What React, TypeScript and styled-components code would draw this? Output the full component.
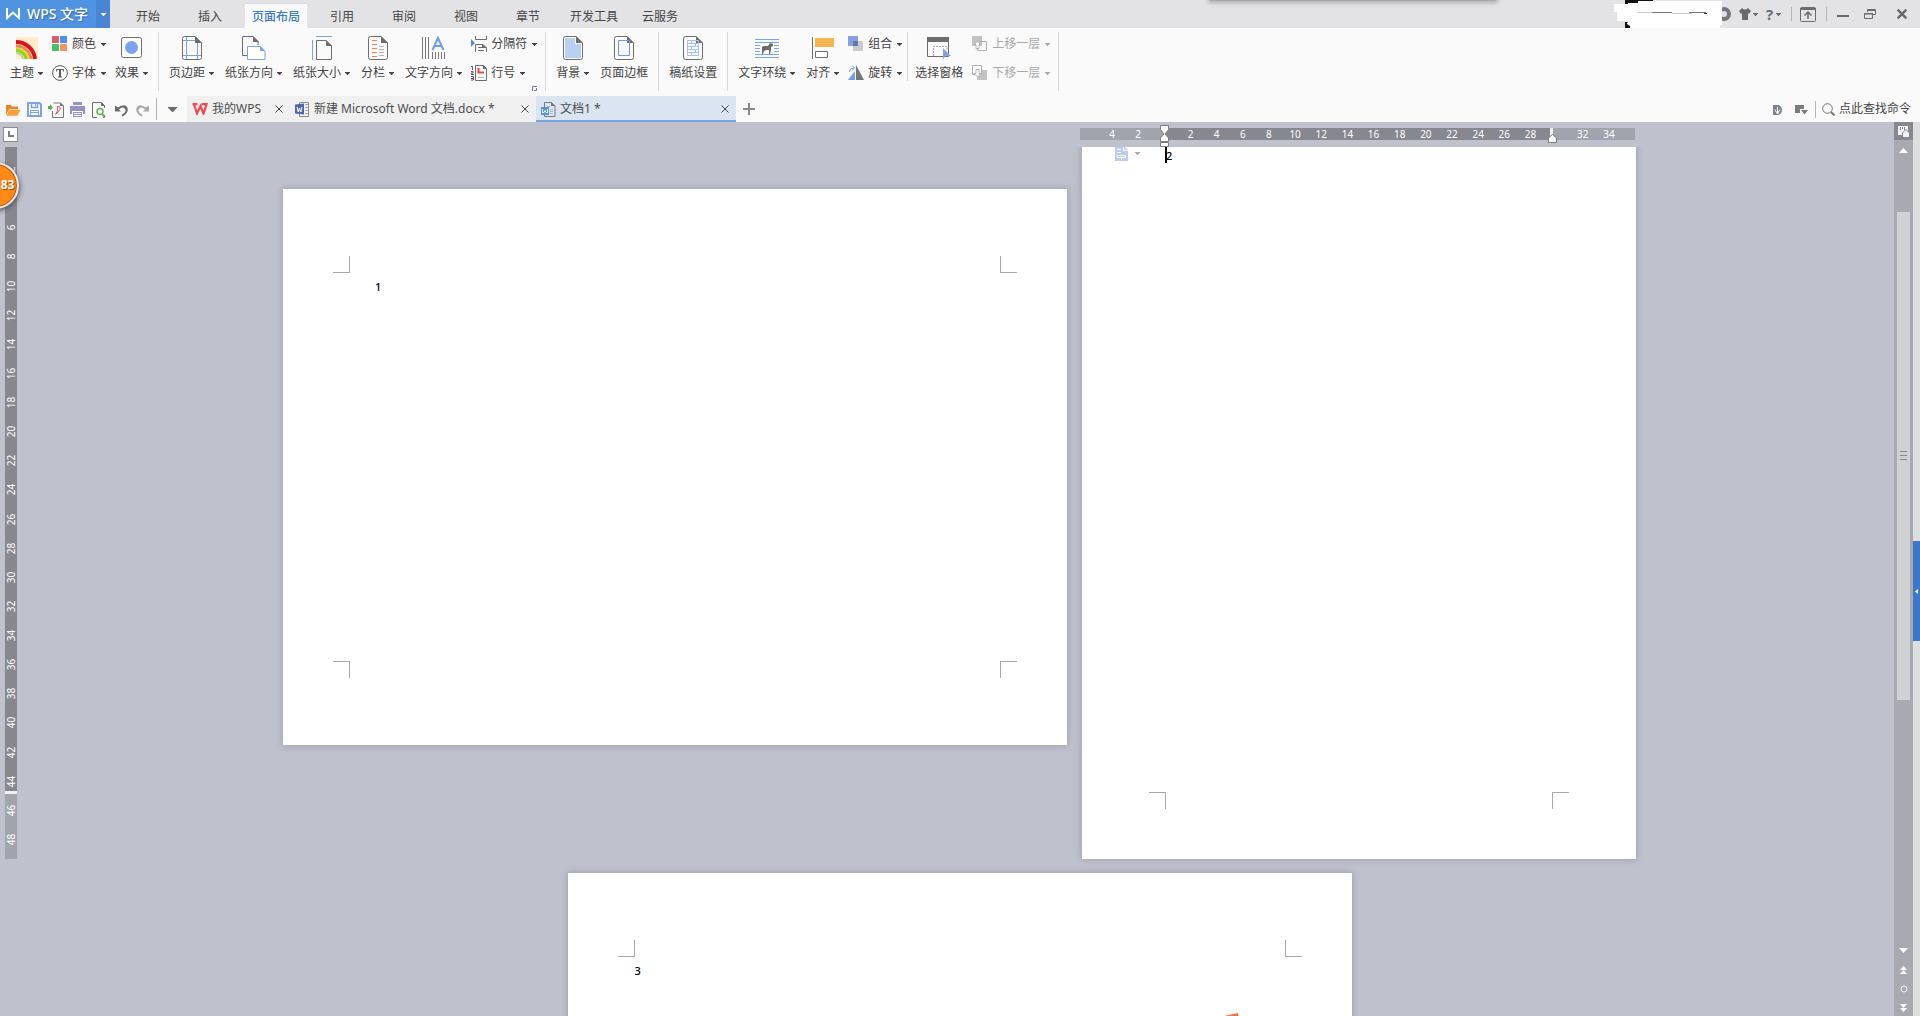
import React from "react";
import styled, { createGlobalStyle } from "styled-components";

const GlobalStyle = createGlobalStyle`
  * { box-sizing: border-box; }
  body {
    margin: 0;
    overflow: hidden;
    font-family: "Noto Sans", "Noto Sans CJK SC", sans-serif;
    font-size: 12px;
    line-height: 16px;
    color: #444;
    background: #bfc2cc;
  }
  button {
    margin: 0;
    padding: 0;
    border: 0;
    background: none;
    font: inherit;
    color: inherit;
    white-space: nowrap;
  }
  svg { display: block; flex: none; }
  p { margin: 0; }
`;

/* ---------- shell ---------- */

const Shell = styled.div`
  position: relative;
  display: flex;
  flex-direction: column;
  height: 100vh;
  overflow: hidden;
`;

const TitleBar = styled.header`
  display: flex;
  height: 28px;
  background: #e3e3e5;
`;

const Brand = styled.button`
  display: flex;
  align-items: center;
  gap: 7px;
  width: 96px;
  padding-left: 6px;
  background: #5093e3;
  color: #fff;
  font-size: 14px;
  font-weight: 500;
  text-shadow: 1px 1px 1px #3568a8;
`;

const BrandMenu = styled.button`
  display: grid;
  place-items: center;
  width: 14px;
  background: #4885d3;
  color: #fff;
`;

const MenuTabs = styled.nav`
  display: flex;
  align-items: flex-end;
  padding-left: 7px;
`;

const MenuTab = styled.button<{ $active?: boolean }>`
  min-width: 54px;
  height: 25px;
  margin: 0 4px;
  padding: 2px 7px 0;
  border: 0 solid #d6dae2;
  border-top-width: ${(p) => (p.$active ? 1 : 0)}px;
  background: ${(p) => (p.$active ? "#fafafa" : "transparent")};
  color: ${(p) => (p.$active ? "#3b78c6" : "#444")};
  font-weight: ${(p) => (p.$active ? 500 : 400)};
`;

const WindowTools = styled.div`
  display: flex;
  align-items: center;
  margin-left: auto;
  padding-right: 13px;
  color: #6a6a6e;
`;

const ToolButton = styled.button<{ $before?: number }>`
  display: flex;
  align-items: center;
  gap: 2px;
  margin-left: ${(p) => p.$before ?? 0}px;
`;

const HelpMark = styled.span`
  width: 9px;
  font-size: 15px;
  font-weight: 700;
`;

const ToolDivider = styled.span<{ $before: number; $height: number }>`
  width: 1px;
  height: ${(p) => p.$height}px;
  margin-left: ${(p) => p.$before}px;
  background: #b4b4b8;
`;

const PopupShade = styled.div`
  position: absolute;
  top: -4px;
  left: 1210px;
  width: 286px;
  height: 5px;
  background: #a9a9ab;
  box-shadow: 0 0 4px 2px #b0b0b3;
`;

/* ---------- ribbon ---------- */

const Ribbon = styled.section`
  display: flex;
  height: 68px;
  padding-top: 4px;
  background: #fafafa;
`;

const Group = styled.div`
  display: flex;
  gap: 1px;
  height: 59px;
  padding: 0 5px;
`;

const Divider = styled.span<{ $inner?: boolean }>`
  width: 1px;
  height: ${(p) => (p.$inner ? 49 : 59)}px;
  margin: 0 ${(p) => (p.$inner ? 1 : 0)}px;
  background: #d9d9dc;
`;

const BigButton = styled.button`
  display: flex;
  flex-direction: column;
  align-items: center;
  height: 52px;
  padding: 4px 5px 0;
`;

const BigIcon = styled.span`
  display: grid;
  place-items: center;
  height: 24px;
  margin-bottom: 4px;
`;

const Label = styled.span<{ $gap: number }>`
  display: flex;
  align-items: center;
  gap: ${(p) => p.$gap}px;
  line-height: 18px;
`;

const Stack = styled.div`
  display: flex;
  flex-direction: column;
  gap: 11px;
  padding: 3px 3px 0;
`;

const SmallButton = styled.button`
  display: flex;
  align-items: center;
  gap: 4px;
  height: 18px;
  &:disabled { color: #a9a9ac; }
`;

const StackWithLauncher = styled.div`
  position: relative;
  display: flex;
`;

const Launcher = styled.button`
  position: absolute;
  right: 3px;
  bottom: 0;
`;

/* ---------- quick bar and document tabs ---------- */

const QuickBar = styled.div`
  display: flex;
  align-items: center;
  height: 26px;
  background: #fafafa;
`;

const QuickTools = styled.div`
  display: flex;
  align-items: center;
  width: 187px;
  padding-left: 2px;
`;

const QuickButton = styled.button<{ $width?: number }>`
  display: grid;
  place-items: center;
  width: ${(p) => p.$width ?? 22}px;
  height: 26px;
  padding-top: 1px;
  color: #6b6b6f;
`;

const DocTab = styled.div<{ $width: number; $active?: boolean }>`
  display: flex;
  align-items: center;
  justify-content: space-between;
  width: ${(p) => p.$width}px;
  height: 26px;
  padding: 0 7px 0 5px;
  background: ${(p) => (p.$active ? "#dbe4f1" : "#f0f0f1")};
  box-shadow: ${(p) => (p.$active ? "inset 0 -2px 0 #78a5df" : "none")};
`;

const DocName = styled.button`
  display: flex;
  align-items: center;
  gap: 4px;
  color: #4c4c4c;
`;

const NewTab = styled.button`
  display: grid;
  place-items: center;
  width: 26px;
  height: 26px;
`;

const FindCommand = styled.button`
  display: flex;
  align-items: center;
  gap: 4px;
  margin-left: 6px;
`;

const QuickRight = styled.div`
  display: flex;
  align-items: center;
  margin-left: auto;
  padding-right: 9px;
`;

/* ---------- workspace ---------- */

const Workspace = styled.main`
  display: flex;
  flex: 1;
  min-height: 0;
`;

const LeftRail = styled.aside`
  width: 25px;
  flex: none;
`;

const TabStop = styled.button`
  display: grid;
  place-items: center;
  width: 15px;
  height: 15px;
  margin: 5px 0 5px 3px;
  border: 1px solid #8b8b93;
  background: #fff;
`;

const VerticalRuler = styled.div`
  display: grid;
  grid-auto-rows: 1fr;
  width: 12px;
  height: 712px;
  margin-left: 5px;
  padding: 8px 0 5px;
  background: linear-gradient(#87878f 644px, #f0f0f2 644px 647px, #a1a4ad 647px);
`;

const Tick = styled.span<{ $vertical?: boolean }>`
  display: grid;
  place-items: center;
  color: #fff;
  font-size: 10px;
  line-height: 12px;
  writing-mode: ${(p) => (p.$vertical ? "vertical-rl" : "horizontal-tb")};
  transform: ${(p) => (p.$vertical ? "rotate(180deg)" : "none")};
`;

const Canvas = styled.div`
  display: flex;
  flex: 1;
  min-width: 0;
  flex-direction: column;
`;

const RulerStrip = styled.div`
  display: flex;
  justify-content: flex-end;
  width: 1353px;
  height: 25px;
  margin: 0 auto;
  padding: 6px 1px 0 0;
`;

const HorizontalRuler = styled.div`
  position: relative;
  display: grid;
  grid-template-columns: repeat(20, 1fr);
  width: 555px;
  height: 12px;
  padding: 0 13px 0 19px;
  background: linear-gradient(
    90deg,
    #a1a4ad 84px,
    #87878f 84px 470px,
    #f0f0f2 470px 473px,
    #a1a4ad 473px
  );
`;

const IndentHandle = styled.span<{ $left: number; $top: number }>`
  position: absolute;
  left: ${(p) => p.$left}px;
  top: ${(p) => p.$top}px;
`;

const PageView = styled.div`
  flex: 1;
  min-height: 0;
  overflow: hidden;
`;

const Pages = styled.div`
  display: flex;
  flex-wrap: wrap;
  align-items: center;
  justify-content: center;
  gap: 14px 15px;
  width: 1353px;
  margin: -72px auto 0;
`;

const Sheet = styled.article<{ $portrait?: boolean }>`
  position: relative;
  display: grid;
  grid-template: 17px 1fr 17px / 17px 1fr 17px;
  width: ${(p) => (p.$portrait ? 554 : 784)}px;
  height: ${(p) => (p.$portrait ? 784 : 556)}px;
  padding: ${(p) => (p.$portrait ? "50px 67px" : "67px 50px")};
  background: #fff;
  box-shadow: 0 0 7px 1px #a0a3b0;
`;

const Mark = styled.span<{ $side: "left" | "right"; $edge: "top" | "bottom" }>`
  grid-row: ${(p) => (p.$edge === "top" ? 1 : 3)};
  grid-column: ${(p) => (p.$side === "left" ? 1 : 3)};
  border: 0 solid #a9a9a9;
  border-right-width: ${(p) => (p.$side === "left" ? 1 : 0)}px;
  border-left-width: ${(p) => (p.$side === "right" ? 1 : 0)}px;
  border-bottom-width: ${(p) => (p.$edge === "top" ? 1 : 0)}px;
  border-top-width: ${(p) => (p.$edge === "bottom" ? 1 : 0)}px;
`;

const Body = styled.p<{ $indent?: boolean }>`
  position: relative;
  grid-row: 2;
  grid-column: 2;
  padding: 5px 0 0 ${(p) => (p.$indent ? 25 : 0)}px;
  color: #000;
  font-size: 11px;
  font-weight: 500;
  line-height: 18px;
`;

const TextCursor = styled.span`
  position: absolute;
  left: -1px;
  top: 3px;
  width: 2px;
  height: 18px;
  background: #000;
`;

const SectionTag = styled.button`
  position: absolute;
  left: 33px;
  top: 71px;
  display: flex;
  align-items: center;
  gap: 7px;
  color: #a9a9a9;
`;

const Stray = styled.span`
  position: absolute;
  left: 656px;
  top: 140px;
`;

const ScrollColumn = styled.div`
  display: flex;
  flex-direction: column;
  align-items: center;
  width: 19px;
  background: #a9a9b3;
`;

const RulerToggle = styled.button`
  display: grid;
  place-items: center;
  width: 19px;
  height: 18px;
  background: #87878f;
`;

const ScrollButton = styled.button`
  display: grid;
  place-items: center;
  width: 19px;
  height: 19px;
  padding-top: 2px;
`;

const ScrollTrack = styled.div`
  display: flex;
  flex: 1;
  flex-direction: column;
  padding-top: 53px;
`;

const ScrollThumb = styled.div`
  display: grid;
  place-items: center;
  width: 13px;
  height: 67%;
  background: #d0d1d5;
`;

const SidePane = styled.aside`
  width: 7px;
  padding-top: 419px;
  background: #dedee1;
`;

const PaneHandle = styled.button`
  display: grid;
  place-items: center;
  width: 7px;
  height: 100px;
  background: #3b78cb;
`;

const Badge = styled.button`
  position: absolute;
  left: -28px;
  top: 162px;
  width: 47px;
  height: 47px;
  padding: 0 0 2px 24px;
  border: 2px solid #ececec;
  border-radius: 50%;
  background: #ff8a18;
  box-shadow: inset 0 0 0 1px #b9560f, 1px 2px 5px #5c5c66;
  color: #fff;
  font-size: 12px;
  font-weight: 700;
  text-align: center;
  text-shadow: 1px 1px 0 #a34e10;
`;

/* ---------- drawings ---------- */

const Caret = ({ size = 5 }: { size?: number }) => (
  <svg width={size} height={Math.ceil(size / 2)} viewBox="0 0 10 6" preserveAspectRatio="none">
    <path d="M0 0h10v1L5 6.500 0 1z" fill="currentColor" />
  </svg>
);

const Cross = ({ size = 8, weight = 1 }: { size?: number; weight?: number }) => (
  <svg width={size} height={size} viewBox="0 0 8 8">
    <path d="M.5.5l7 7M7.500.5l-7 7" stroke="currentColor" strokeWidth={weight} />
  </svg>
);

const Paper = ({ children, fill = "none" }: { children?: React.ReactNode; fill?: string }) => (
  <svg width="20" height="24" viewBox="0 0 20 24" fill="none">
    <path
      d="M2.5.5H13L19.5 7v14.5q0 2-2 2h-15q-2 0-2-2v-19q0-2 2-2z"
      fill={fill}
      stroke="#6d6d6d"
    />
    <path d="M13 0v7h7z" fill="#6d6d6d" />
    {children}
  </svg>
);

const icons = {
  theme: (
    <svg width="22" height="22" viewBox="0 0 22 22" fill="none">
      <path d="M0 0h22v22H0z" fill="#ffecc9" />
      <path d="M0 5a19 19 0 0 1 19 17" stroke="#d8151c" strokeWidth="4" />
      <path d="M0 9a15 15 0 0 1 15 13" stroke="#e98a4e" strokeWidth="3" />
      <path d="M0 11.500a12 12 0 0 1 12 10.500" stroke="#f3c93e" strokeWidth="2" />
      <path d="M0 13.500a10 10 0 0 1 10 8.500" stroke="#7be014" strokeWidth="3" />
      <path d="M0 16a7 7 0 0 1 7 6" stroke="#c9bda3" strokeWidth="1.500" />
    </svg>
  ),
  colors: (
    <svg width="16" height="16" viewBox="0 0 16 16">
      <path d="M0 0h7v7H0z" fill="#d95f63" />
      <path d="M8 0h7v7H8z" fill="#4b90ea" />
      <path d="M0 8h7v7H0z" fill="#42c46d" />
      <path d="M8 8h7v7H8z" fill="#ef9560" />
    </svg>
  ),
  font: (
    <svg width="16" height="16" viewBox="0 0 16 16" fill="none" stroke="#5c5c5c">
      <circle cx="8" cy="8" r="7.400" />
      <path d="M4.500 6.500V4.500h7v2M6 12h4" />
      <path d="M8 4.500V12" strokeWidth="2" />
    </svg>
  ),
  effect: (
    <svg width="22" height="22" viewBox="0 0 22 22">
      <rect x=".5" y=".5" width="20" height="20" rx="2" fill="#fff" stroke="#6d6d6d" />
      <circle cx="10.500" cy="10.500" r="6.500" fill="#7ba3ee" />
    </svg>
  ),
  margins: (
    <Paper>
      <path d="M4.500 1v22M15.500 7v16M1 4.500h12M1 19.500h18" stroke="#7ba3e6" />
    </Paper>
  ),
  orientation: (
    <svg width="24" height="24" viewBox="0 0 24 24" fill="none">
      <path d="M5 19.500H.5v-19H11l5 5V9" stroke="#6d6d6d" />
      <path d="M11 0v6h6z" fill="#6d6d6d" />
      <path d="M5.500 10.500h13l4.500 4.500v8.500H5.500z" stroke="#7ba3e6" fill="#fff" />
      <path d="M18 10v5h5z" fill="#7ba3e6" />
    </svg>
  ),
  size: (
    <svg width="20" height="24" viewBox="0 0 20 24" fill="none">
      <path d="M4 .5h16M.5 4v20" stroke="#7ba3e6" />
      <path d="M4.500 4.500H14l5.500 5.500v13.500h-15z" stroke="#6d6d6d" />
      <path d="M14 4v6h6z" fill="#6d6d6d" />
    </svg>
  ),
  columns: (
    <Paper>
      <path d="M4 4.500h5M4 8.500h5M4 12.500h5M4 16.500h5M4 20.500h5" stroke="#ef8647" />
      <path d="M11 10.500h5M11 13.500h5M11 16.500h5M11 19.500h5" stroke="#b5b5b5" />
    </Paper>
  ),
  direction: (
    <svg width="23" height="24" viewBox="0 0 23 24" fill="none">
      <path
        d="M.5 1v22M3.500 1v22M6.500 1v22M10.500 16v7M13.500 16v7M16.500 16v7M19.500 16v7M22.500 16v7"
        stroke="#777"
      />
      <path d="M10.500 14L16 2l5.500 12M12.500 10h7" stroke="#6f9df0" strokeWidth="2" />
    </svg>
  ),
  breaks: (
    <svg width="16" height="16" viewBox="0 0 16 16" fill="none">
      <path d="M0 3l4 4-4 4z" fill="#5d87d6" />
      <path d="M4.500 0v3.500h11V0M4.500 16V8.500H12l3.500 3.500v4M7 11.500h4M7 14.500h6" stroke="#6d6d6d" />
      <path d="M11 8v4h5z" fill="#6d6d6d" />
    </svg>
  ),
  lineNo: (
    <svg width="16" height="16" viewBox="0 0 16 16" fill="none">
      <path
        d="M0 1.500h1.500V5M0 6.500h2v1.500h-2v1.500h3M0 11.500h2.500v3.500H0M0 13.500h2"
        stroke="#5c5c5c"
      />
      <path d="M4.500.5h8l3 3v12h-11z" stroke="#6d6d6d" />
      <path d="M12 0v4h4z" fill="#6d6d6d" />
      <path d="M7.500 3v4.500H13" stroke="#e34b4b" strokeWidth="2" />
      <path d="M7 12.500h6" stroke="#b5b5b5" />
    </svg>
  ),
  background: (
    <Paper fill="#fff">
      <path d="M2 2h10v6h6v14H2z" fill="#b9cff3" />
    </Paper>
  ),
  border: (
    <Paper>
      <path d="M4.500 4.500h11v15h-11z" stroke="#6f9ade" />
    </Paper>
  ),
  grid: (
    <Paper>
      <path
        d="M4.500 4.500h11v15h-11zM4 7.500h12M4 10.500h12M4 13.500h12M4 16.500h12M8.500 4v3M12.500 7v3M8.500 10v3M12.500 13v3M8.500 16v3"
        stroke="#a9c0ec"
      />
    </Paper>
  ),
  wrap: (
    <svg width="24" height="24" viewBox="0 0 24 24" fill="none">
      <path
        d="M0 3.500h24M0 6.500h24M0 18.500h24M0 21.500h24M0 9.500h5M0 12.500h5M0 15.500h5M19 9.500h5M19 12.500h5M19 15.500h5"
        stroke="#7ba3e6"
      />
      <path
        d="M7 11l2-1h4l2-3 3 1v2l-2 1v3l-1 4h-1v-4h-3l-2 1-1 3H7v-4z"
        fill="#6b6b6b"
      />
    </svg>
  ),
  align: (
    <svg width="22" height="24" viewBox="0 0 22 24" fill="none">
      <path d="M.5 1v22" stroke="#6d6d6d" />
      <path d="M3 2h19v9H3z" fill="#f2b552" />
      <path d="M3.500 15.500h12v6h-12z" stroke="#6d6d6d" fill="#fff" />
    </svg>
  ),
  group: (
    <svg width="16" height="16" viewBox="0 0 16 16">
      <path d="M5 5h10v10H5z" fill="#cbcbcd" />
      <path d="M0 0h10v10H0z" fill="#86a0e2" />
      <path d="M5 5h5v5H5z" fill="#6378b0" />
    </svg>
  ),
  rotate: (
    <svg width="16" height="16" viewBox="0 0 16 16" fill="none">
      <path d="M7 6v9H0z" fill="#6f9df0" />
      <path d="M1.500 7q0-4 4-4M4 .5L6.500 3 4 5.500" stroke="#6f9df0" />
      <path d="M8 0l8 15H8z" fill="#757575" />
    </svg>
  ),
  pane: (
    <svg width="24" height="24" viewBox="0 0 24 24" fill="none">
      <path d="M.5 2.500h21v18H.5z" stroke="#6d6d6d" />
      <path d="M0 1h22v5H0z" fill="#6d6d6d" />
      <path d="M6.500 20v-9.500H20V14" stroke="#aaa" strokeDasharray="2 1" />
      <path d="M16 12l8 8h-5l-3 3z" fill="#86a0e2" />
    </svg>
  ),
  forward: (
    <svg width="16" height="16" viewBox="0 0 16 16" fill="none">
      <path d="M0 0h10v10H0z" fill="#c3c3c6" />
      <path d="M8 5.500h6.500v9H5.500V11" stroke="#b0b0b3" />
      <path d="M5.500 5l3 3.500H7v4H4v-4H2.500z" fill="#fff" stroke="#b0b0b3" />
    </svg>
  ),
  backward: (
    <svg width="16" height="16" viewBox="0 0 16 16" fill="none">
      <path d="M5 5h10v10H5z" fill="#c3c3c6" />
      <path d="M.5.5h9v9h-9z" fill="#fff" stroke="#b0b0b3" />
      <path d="M4 4.500h3v4h2L5.500 12 2 8.500h2z" fill="#fff" stroke="#b0b0b3" />
    </svg>
  ),
  open: (
    <svg width="16" height="14" viewBox="0 0 16 14">
      <path d="M1 12V2h5l1 1.500h6V6H5z" fill="#f2811f" />
      <path d="M4 6.500h12L12.500 13H1z" fill="#ff9d37" stroke="#fff" strokeWidth=".5" />
    </svg>
  ),
  save: (
    <svg width="15" height="15" viewBox="0 0 15 15" fill="none" stroke="#7aa3e8">
      <path d="M1 1h11.500L14 2.500V14H1z" strokeWidth="2" />
      <path d="M4.500 1v4.500h6V1" strokeWidth="1.500" />
      <path d="M8.500 2v2.500" />
      <path d="M3.500 14V8.500h8V14M3 10.500h9" />
    </svg>
  ),
  pdf: (
    <svg width="16" height="16" viewBox="0 0 16 16" fill="none">
      <path d="M5.500 1h7l3 3v11.500h-11V9" stroke="#777" />
      <path d="M12 .5V4h4z" fill="#777" />
      <path d="M0 4h2V2l3 3.500-3 3V7H0z" fill="#58b04a" />
      <path d="M9 4.500q4.500 0 3 3T7 12.500M9.500 4.500v4L8 12" stroke="#e05252" />
    </svg>
  ),
  print: (
    <svg width="16" height="15" viewBox="0 0 16 15" fill="#9491c9">
      <path d="M3 0h9v3H3zM0 4h15v8h-2V9H2v3H0zM3 10h9v5H3z" />
      <path d="M4 11.500h7M4 13.500h7" stroke="#fff" />
    </svg>
  ),
  preview: (
    <svg width="14" height="16" viewBox="0 0 14 16" fill="none">
      <path d="M5 15.500H.5V.5h9l3 3V6M12.500 13v2.500H11" stroke="#6d6d6d" />
      <path d="M9 0v4h4z" fill="#6d6d6d" />
      <circle cx="8" cy="9.500" r="3" stroke="#62b04f" strokeWidth="1.500" />
      <path d="M10 12l3 3" stroke="#62b04f" strokeWidth="2" />
    </svg>
  ),
  undo: (
    <svg width="13" height="14" viewBox="0 0 13 14" fill="none">
      <path d="M0 2.500v6h6L4 6.500q4-3.500 6-.5T6.500 12l1 1.500Q14 10 12.500 5T3 4.500z" fill="#6b6b6f" />
    </svg>
  ),
  redo: (
    <svg width="13" height="14" viewBox="0 0 13 14" fill="none">
      <path d="M13 2.500v6H7l2-2Q5 3 3 6t3.500 6l-1 1.500Q-1 10 .5 5T10 4.500z" fill="#a9a9ac" />
    </svg>
  ),
  wpsRed: (
    <svg width="16" height="12" viewBox="0 0 16 12" fill="none" stroke="#ef4b4e" strokeWidth="2.200">
      <path d="M.5 1.200h5M2 1.500L5 10.500 8.500 3l3 7.500 3-9.300h-5" />
    </svg>
  ),
  wordBlue: (
    <svg width="15" height="15" viewBox="0 0 15 15" fill="none">
      <path d="M4.500 3V.5h9v14h-9V12M10.500 2.500h2M10.500 5.500h2M10.500 8.500h2M10.500 11.500h2" stroke="#8a8a90" />
      <path d="M0 2.500l9-1v11l-9-1z" fill="#4d68a8" />
      <path d="M2 5l1.200 5 1.300-4 1.300 4L7 5" stroke="#fff" />
    </svg>
  ),
  writer: (
    <svg width="15" height="15" viewBox="0 0 15 15" fill="none">
      <path d="M3.500 5V.5h7l3.500 3.500v10.500H3.500V13" stroke="#77777c" />
      <path d="M10 0v4h4.500z" fill="#77777c" />
      <path d="M6 4.500h3M9 7.500h3M9 9.500h3M9 11.500h3" stroke="#b5b5b5" />
      <path d="M0 5h8v8H0z" fill="#4f93e4" />
      <path d="M1.500 7v3.500h1.500L4 8.500l1 2h1.500V7" stroke="#fff" />
    </svg>
  ),
};

const BrandLogo = () => (
  <svg width="14" height="12" viewBox="0 0 14 12" fill="none" stroke="#fff" strokeWidth="2">
    <path d="M1 0v10L7 4.500l6 5.500V0" />
  </svg>
);

const MaskedAccount = () => (
  <svg width="118" height="28" viewBox="0 0 118 28">
    <path d="M11 0h28v2l-5 1-6 2H11zM11 22h3v3l4 3h-7z" fill="#111" />
    <circle cx="110" cy="14" r="5" fill="none" stroke="#77777b" strokeWidth="4" />
    <path d="M0 4h14V3h10V1h84v24h-2v4H13v-6l2-2H3V12H0z" fill="#fff" />
    <path d="M11 22h2v2l3 2v2h-5z" fill="#111" />
    <path d="M23 12.500h16M58 13.500h20" stroke="#c9c9cc" />
    <path d="M38 12.500h20M75 12.500h17" stroke="#77777c" />
    <path d="M90 13.500h3" stroke="#333" />
  </svg>
);

/* ---------- parts ---------- */

type IconName = keyof typeof icons;

const Big = ({ icon, label, menu = true }: { icon: IconName; label: string; menu?: boolean }) => (
  <BigButton>
    <BigIcon>{icons[icon]}</BigIcon>
    <Label $gap={4}>
      {label}
      {menu && <Caret />}
    </Label>
  </BigButton>
);

const Small = ({ icon, label, disabled }: { icon: IconName; label: string; disabled?: boolean }) => (
  <SmallButton disabled={disabled}>
    {icons[icon]}
    <Label $gap={5}>
      {label}
      <Caret />
    </Label>
  </SmallButton>
);

const Marks = () => (
  <>
    <Mark $side="left" $edge="top" />
    <Mark $side="right" $edge="top" />
    <Mark $side="left" $edge="bottom" />
    <Mark $side="right" $edge="bottom" />
  </>
);

const menus = ["开始", "插入", "页面布局", "引用", "审阅", "视图", "章节", "开发工具", "云服务"];

const quickTools: { icon: IconName; name: string }[] = [
  { icon: "open", name: "打开" },
  { icon: "save", name: "保存" },
  { icon: "pdf", name: "输出为PDF" },
  { icon: "print", name: "打印" },
  { icon: "preview", name: "打印预览" },
  { icon: "undo", name: "撤销" },
  { icon: "redo", name: "恢复" },
];

const documents: { icon: IconName; name: string; width: number; active?: boolean }[] = [
  { icon: "wpsRed", name: "我的WPS", width: 103 },
  { icon: "wordBlue", name: "新建 Microsoft Word 文档.docx *", width: 246 },
  { icon: "writer", name: "文档1 *", width: 200, active: true },
];

const columnTicks = [
  "4", "2", "", "2", "4", "6", "8", "10", "12", "14",
  "16", "18", "20", "22", "24", "26", "28", "", "32", "34",
];
const rowTicks = Array.from({ length: 24 }, (_, i) => String(2 * (i + 1)));

export default function App() {
  return (
    <Shell>
      <GlobalStyle />
      <TitleBar>
        <Brand>
          <BrandLogo />
          WPS 文字
        </Brand>
        <BrandMenu aria-label="菜单">
          <Caret />
        </BrandMenu>
        <MenuTabs>
          {menus.map((m) => (
            <MenuTab key={m} $active={m === "页面布局"}>
              {m}
            </MenuTab>
          ))}
        </MenuTabs>
        <WindowTools>
          <MaskedAccount />
          <ToolButton $before={7} aria-label="皮肤">
            <svg width="12" height="12" viewBox="0 0 12 12">
              <path d="M3 0q3 3 6 0l3 3-2 3-1-1v7H3V5L2 6 0 3z" fill="currentColor" />
            </svg>
            <Caret />
          </ToolButton>
          <ToolButton $before={7} aria-label="帮助">
            <HelpMark>?</HelpMark>
            <Caret />
          </ToolButton>
          <ToolDivider $before={10} $height={14} />
          <ToolButton $before={8} aria-label="隐藏功能区">
            <svg width="16" height="15" viewBox="0 0 16 15" fill="none" stroke="currentColor">
              <rect x=".5" y=".5" width="15" height="14" rx="1" />
              <path d="M0 2h16" strokeWidth="2" />
              <path d="M8 12V6M4.500 8.500L8 5l3.500 3.500" strokeWidth="1.500" />
            </svg>
          </ToolButton>
          <ToolDivider $before={10} $height={14} />
          <ToolButton $before={10} aria-label="最小化">
            <svg width="12" height="12" viewBox="0 0 12 12">
              <path d="M0 7h12v2H0z" fill="currentColor" />
            </svg>
          </ToolButton>
          <ToolButton $before={15} aria-label="还原">
            <svg width="12" height="10" viewBox="0 0 12 10" fill="none" stroke="currentColor">
              <path d="M3.500 3V.5h8v5H9M.5 4.500h8v5h-8zM3 1.500h8M0 5h9" />
            </svg>
          </ToolButton>
          <ToolButton $before={21} aria-label="关闭">
            <Cross size={10} weight={2} />
          </ToolButton>
        </WindowTools>
      </TitleBar>

      <Ribbon>
        <Group>
          <Big icon="theme" label="主题" />
          <Stack>
            <Small icon="colors" label="颜色" />
            <Small icon="font" label="字体" />
          </Stack>
          <Big icon="effect" label="效果" />
        </Group>
        <Divider />
        <Group>
          <Big icon="margins" label="页边距" />
          <Big icon="orientation" label="纸张方向" />
          <Big icon="size" label="纸张大小" />
          <Big icon="columns" label="分栏" />
          <Big icon="direction" label="文字方向" />
          <StackWithLauncher>
            <Stack>
              <Small icon="breaks" label="分隔符" />
              <Small icon="lineNo" label="行号" />
            </Stack>
            <Launcher aria-label="页面设置">
              <svg width="5" height="5" viewBox="0 0 5 5" fill="none" stroke="#6d7a90">
                <path d="M.5 5V.5H5M4.500 2v2.500H2" />
              </svg>
            </Launcher>
          </StackWithLauncher>
        </Group>
        <Divider />
        <Group>
          <Big icon="background" label="背景" />
          <Big icon="border" label="页面边框" menu={false} />
        </Group>
        <Divider />
        <Group>
          <Big icon="grid" label="稿纸设置" menu={false} />
        </Group>
        <Divider />
        <Group>
          <Big icon="wrap" label="文字环绕" />
          <Big icon="align" label="对齐" />
          <Stack>
            <Small icon="group" label="组合" />
            <Small icon="rotate" label="旋转" />
          </Stack>
          <Divider $inner />
          <Big icon="pane" label="选择窗格" menu={false} />
          <Stack>
            <Small icon="forward" label="上移一层" disabled />
            <Small icon="backward" label="下移一层" disabled />
          </Stack>
        </Group>
        <Divider />
      </Ribbon>

      <QuickBar>
        <QuickTools>
          {quickTools.map((t) => (
            <QuickButton key={t.name} aria-label={t.name}>
              {icons[t.icon]}
            </QuickButton>
          ))}
          <ToolDivider $before={3} $height={22} />
          <QuickButton $width={30} aria-label="自定义快速访问工具栏">
            <Caret size={9} />
          </QuickButton>
        </QuickTools>
        {documents.map((d) => (
          <DocTab key={d.name} $width={d.width} $active={d.active}>
            <DocName>
              {icons[d.icon]}
              {d.name}
            </DocName>
            <button aria-label="关闭">
              <Cross />
            </button>
          </DocTab>
        ))}
        <NewTab aria-label="新建">
          <svg width="12" height="12" viewBox="0 0 12 12">
            <path d="M5 0h2v5h5v2H7v5H5V7H0V5h5z" fill="#88888c" />
          </svg>
        </NewTab>
        <QuickRight>
          <QuickButton aria-label="文档助手">
            <svg width="9" height="10" viewBox="0 0 9 10">
              <path d="M0 0h5q4 1 4 5t-4 5H0z" fill="#7c8193" />
              <path d="M4.500 9V2M4.500 9L2 4.500M4.500 9L7 4.500" stroke="#fff" />
            </svg>
          </QuickButton>
          <QuickButton $width={26} aria-label="切换窗口">
            <svg width="13" height="10" viewBox="0 0 13 10" fill="#7d7d80">
              <path d="M0 0h9v4H5v4H0z" />
              <path d="M6 5h7L9.500 9.500z" />
            </svg>
          </QuickButton>
          <ToolDivider $before={0} $height={17} />
          <FindCommand>
            <svg width="13" height="13" viewBox="0 0 13 13" fill="none" stroke="#77777b">
              <circle cx="5.500" cy="5.500" r="4.800" />
              <path d="M9 9l3.500 3.500" strokeWidth="2" />
            </svg>
            点此查找命令
          </FindCommand>
        </QuickRight>
      </QuickBar>

      <Workspace>
        <LeftRail>
          <TabStop aria-label="制表符">
            <svg width="7" height="7" viewBox="0 0 7 7">
              <path d="M1 0h2v4h4v2H1z" fill="#7d7d85" />
            </svg>
          </TabStop>
          <VerticalRuler>
            {rowTicks.map((t) => (
              <Tick key={t} $vertical>
                {t}
              </Tick>
            ))}
          </VerticalRuler>
        </LeftRail>

        <Canvas>
          <RulerStrip>
            <HorizontalRuler>
              {columnTicks.map((t, i) => (
                <Tick key={i}>{t}</Tick>
              ))}
              <IndentHandle $left={80} $top={-3}>
                <svg width="9" height="22" viewBox="0 0 9 22" fill="#fff" stroke="#7b7b82">
                  <path d="M.5.5h8v4L5 9l3.500 4v3.500h-8V13L4 9 .5 4.500z" />
                  <path d="M.5 17.500h8v4h-8z" />
                </svg>
              </IndentHandle>
              <IndentHandle $left={468} $top={6}>
                <svg width="9" height="9" viewBox="0 0 9 9" fill="#fff" stroke="#7b7b82">
                  <path d="M.5 8.500V4l4-3.500 4 3.500v4.500z" />
                </svg>
              </IndentHandle>
            </HorizontalRuler>
          </RulerStrip>
          <PageView>
            <Pages>
              <Sheet>
                <Marks />
                <Body $indent>1</Body>
              </Sheet>
              <Sheet $portrait>
                <Marks />
                <Body>
                  <TextCursor />2
                </Body>
                <SectionTag aria-label="节选项">
                  <svg width="13" height="15" viewBox="0 0 13 15" fill="none">
                    <path d="M0 0h9l4 4v11H0z" fill="#b9cdec" />
                    <path d="M2 3.500h4M2 6.500h4M8.500 0v4.500H13M2.500 9.500h8v2h-8zM6.500 11v3" stroke="#fff" />
                  </svg>
                  <Caret />
                </SectionTag>
              </Sheet>
              <Sheet>
                <Marks />
                <Body>3</Body>
                <Stray>
                  <svg width="16" height="12" viewBox="0 0 16 12">
                    <path d="M0 3l14-3 2 12H6V4z" fill="#f7714a" />
                  </svg>
                </Stray>
              </Sheet>
            </Pages>
          </PageView>
        </Canvas>

        <ScrollColumn>
          <RulerToggle aria-label="标尺">
            <svg width="11" height="11" viewBox="0 0 11 11" fill="none">
              <path d="M0 0h10v5L8 3 4 7v2H0z" fill="#f2f2f4" />
              <path d="M2.500 1v3M4.500 1v2M6.500 1v3" stroke="#87878f" />
              <path d="M8 4l3 3v4H5V7z" fill="#f2f2f4" />
            </svg>
          </RulerToggle>
          <ScrollButton aria-label="向上滚动">
            <svg width="9" height="5" viewBox="0 0 9 5">
              <path d="M4.500 0L9 5H0z" fill="#fff" />
            </svg>
          </ScrollButton>
          <ScrollTrack>
            <ScrollThumb>
              <svg width="7" height="9" viewBox="0 0 7 9">
                <path d="M0 .5h7M0 4.500h7M0 8.500h7" stroke="#85858c" />
              </svg>
            </ScrollThumb>
          </ScrollTrack>
          <ScrollButton aria-label="向下滚动">
            <svg width="9" height="5" viewBox="0 0 9 5">
              <path d="M0 0h9L4.500 5z" fill="#fff" />
            </svg>
          </ScrollButton>
          <ScrollButton aria-label="上一页">
            <svg width="7" height="8" viewBox="0 0 7 8">
              <path d="M3.500 0L7 4H0zM3.500 4L7 8H0z" fill="#fff" />
            </svg>
          </ScrollButton>
          <ScrollButton aria-label="选择浏览对象">
            <svg width="8" height="8" viewBox="0 0 8 8">
              <circle cx="4" cy="4" r="3" fill="none" stroke="#f2f2f4" />
            </svg>
          </ScrollButton>
          <ScrollButton aria-label="下一页">
            <svg width="7" height="8" viewBox="0 0 7 8">
              <path d="M0 0h7L3.500 4zM0 4h7L3.500 8z" fill="#fff" />
            </svg>
          </ScrollButton>
        </ScrollColumn>
        <SidePane>
          <PaneHandle aria-label="展开任务窗格">
            <svg width="3" height="5" viewBox="0 0 3 5">
              <path d="M3 0v5L0 2.500z" fill="#fff" />
            </svg>
          </PaneHandle>
        </SidePane>
      </Workspace>

      <PopupShade />
      <Badge>83</Badge>
    </Shell>
  );
}
